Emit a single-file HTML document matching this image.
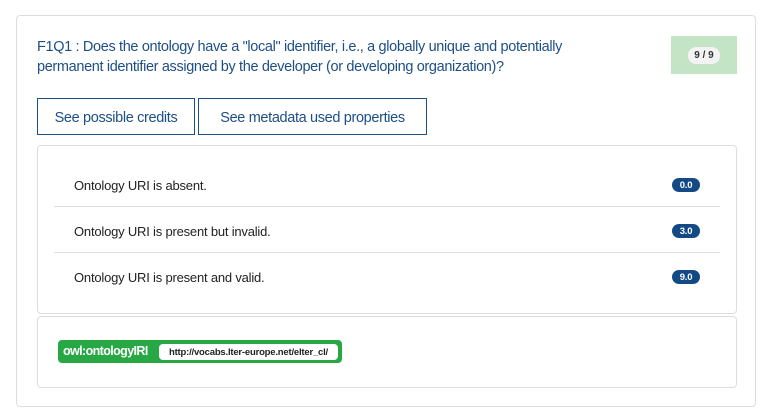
<!DOCTYPE html>
<html><head><style>
body{margin:0;width:767px;height:416px;background:#fff;font-family:"Liberation Sans",sans-serif;position:relative;overflow:hidden}
.card{position:absolute;left:16px;top:15px;width:740px;height:392px;border:1px solid #ddd;border-radius:4px;box-sizing:border-box}
.title{position:absolute;left:37px;top:37px;width:585px;color:#1d4f86;font-size:14.5px;line-height:20px;letter-spacing:-0.35px}
.score{position:absolute;left:671px;top:36px;width:66px;height:38px;background:#c3e5c6}
.score span{position:absolute;left:17px;top:11px;width:32px;height:17px;background:#f3f3f3;border-radius:8px;font-size:10px;font-weight:bold;color:#333;display:flex;align-items:center;justify-content:center}
.btn{position:absolute;top:98px;height:37px;border:1px solid #1d4f86;box-sizing:border-box;color:#1d4f86;font-size:14.5px;display:flex;align-items:center;justify-content:center;padding-top:3px;letter-spacing:-0.35px}
.box{position:absolute;left:37px;width:700px;border:1px solid #ddd;border-radius:4px;box-sizing:border-box}
.row{position:absolute;left:54px;width:666px;height:46px;font-size:13px;color:#222;letter-spacing:-0.2px}
.row .t{position:absolute;left:20px;top:2px;line-height:46px}
.row .b{position:absolute;left:618px;top:17px;width:28px;height:14px;background:#134a86;border-radius:7px;color:#fff;font-size:9.5px;font-weight:bold;display:flex;align-items:center;justify-content:center}
.sep{position:absolute;left:54px;width:666px;height:1px;background:#ddd}
.pill{position:absolute;left:58px;top:340px;width:284px;height:23px;background:#28a745;border-radius:4px}
.pill .k{position:absolute;left:5px;top:0;line-height:23px;color:#fff;font-weight:bold;font-size:12.5px;letter-spacing:-0.6px}
.pill .v{position:absolute;left:101px;top:4px;width:179px;height:16px;background:#fff;border-radius:4px;font-size:9.5px;font-weight:bold;color:#222;display:flex;align-items:center;justify-content:center;letter-spacing:-0.2px}
</style></head><body>
<div class="card"></div>
<div class="title">F1Q1 : Does the ontology have a "local" identifier, i.e., a globally unique and potentially permanent identifier assigned by the developer (or developing organization)?</div>
<div class="score"><span>9 / 9</span></div>
<div class="btn" style="left:37px;width:158px">See possible credits</div>
<div class="btn" style="left:198px;width:229px">See metadata used properties</div>
<div class="box" style="top:145px;height:169px"></div>
<div class="row" style="top:161px"><span class="t">Ontology URI is absent.</span><span class="b">0.0</span></div>
<div class="sep" style="top:206px"></div>
<div class="row" style="top:207px"><span class="t">Ontology URI is present but invalid.</span><span class="b">3.0</span></div>
<div class="sep" style="top:252px"></div>
<div class="row" style="top:253px"><span class="t">Ontology URI is present and valid.</span><span class="b">9.0</span></div>
<div class="box" style="top:316px;height:72px"></div>
<div class="pill"><span class="k">owl:ontologyIRI</span><span class="v">http://vocabs.lter-europe.net/elter_cl/</span></div>
</body></html>
